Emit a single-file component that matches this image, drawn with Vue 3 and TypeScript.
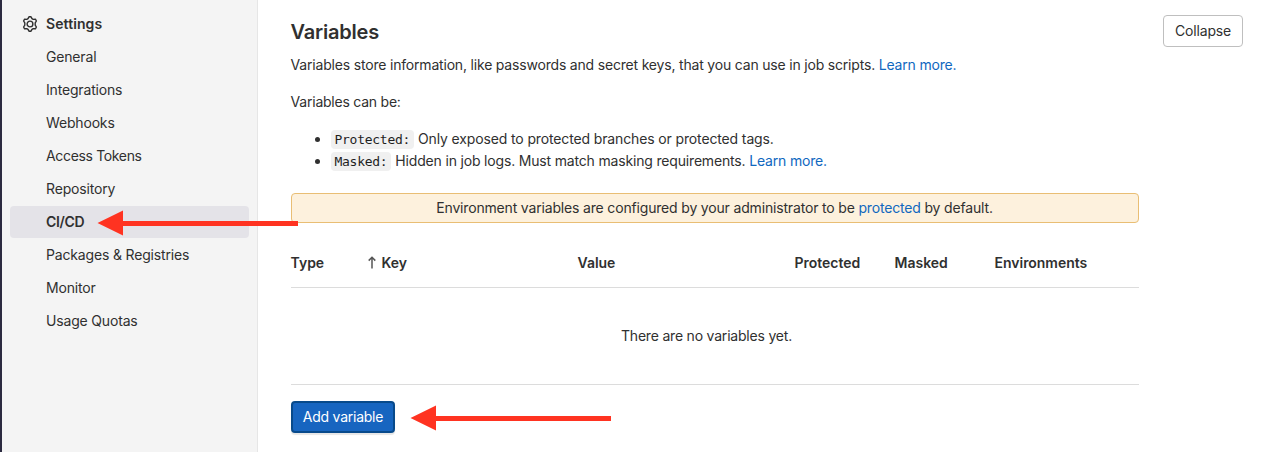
<script setup lang="ts">
interface NavItem {
  label: string
  active?: boolean
}

const navItems: NavItem[] = [
  { label: 'General' },
  { label: 'Integrations' },
  { label: 'Webhooks' },
  { label: 'Access Tokens' },
  { label: 'Repository' },
  { label: 'CI/CD', active: true },
  { label: 'Packages & Registries' },
  { label: 'Monitor' },
  { label: 'Usage Quotas' },
]
</script>

<template>
  <div class="page">
    <aside class="sidebar">
      <div class="nav-title">
        <svg class="gear" viewBox="0 0 16 16" width="16" height="16" fill="none" stroke="#303030" stroke-width="1.4" stroke-linejoin="round">
          <path d="M7 .8h2l1 1.900 1.200.7 2.200-.2 1 1.800-1.200 1.900v2.200l1.200 1.900-1 1.800-2.200-.2-1.200.7-1 1.900H7l-1-1.900-1.200-.7-2.200.2-1-1.800 1.200-1.900V6.900L1.600 5l1-1.800 2.200.2L6 2.700z" />
          <circle cx="8" cy="8" r="2.900" />
        </svg>
        <span>Settings</span>
      </div>
      <nav>
        <a v-for="item in navItems" :key="item.label" class="nav-item" :class="{ active: item.active }">{{ item.label }}</a>
      </nav>
    </aside>

    <main class="content">
      <header class="head">
        <h4>Variables</h4>
        <button class="btn collapse" type="button">Collapse</button>
      </header>
      <div class="body">
        <p class="intro">Variables store information, like passwords and secret keys, that you can use in job scripts. <a>Learn more.</a></p>
        <p class="can-be">Variables can be:</p>
        <ul>
          <li><code>Protected:</code> <span class="protected-text">Only exposed to protected branches or protected tags.</span></li>
          <li><code>Masked:</code> <span>Hidden in job logs. Must match masking requirements. <a>Learn more.</a></span></li>
        </ul>
        <div class="banner">Environment variables are configured by your administrator to be <a>protected</a> by default.</div>
        <div class="row thead">
          <span>Type</span>
          <span class="key">
            <svg width="8" height="13" viewBox="0 0 8 13" fill="none" stroke="#555" stroke-width="1.500"><path d="M4 12.500V1.400M.7 4.600 4 1.300l3.300 3.300" /></svg>
            Key
          </span>
          <span>Value</span>
          <span>Protected</span>
          <span>Masked</span>
          <span>Environments</span>
        </div>
        <div class="empty">There are no variables yet.</div>
        <button class="btn add" type="button">Add variable</button>
      </div>
    </main>

    <svg class="arrow arrow-nav" width="202" height="26" viewBox="0 0 202 26" fill="#ff3321">
      <path d="M.5 13 26 .5V11h175v5H26v9.500z" />
    </svg>
    <svg class="arrow arrow-add" width="202" height="26" viewBox="0 0 202 26" fill="#ff3321">
      <path d="M.5 13 26 .5V11h175v5H26v9.500z" />
    </svg>
  </div>
</template>

<style>
body {
  margin: 0;
  background: #fff;
}
</style>

<style scoped>
.page {
  position: relative;
  display: flex;
  width: 1276px;
  height: 452px;
  overflow: hidden;
  box-sizing: border-box;
  border-left: 2px solid #2b2a40;
  background: #fff;
  color: #303030;
  font: 14px/20px Inter, "Liberation Sans", sans-serif;
}
.sidebar {
  box-sizing: border-box;
  flex: none;
  width: 256px;
  padding: 8px 8px 0;
  background: #f4f4f4;
  border-right: 1px solid #e6e6e6;
}
.nav-title {
  display: flex;
  align-items: center;
  gap: 8px;
  height: 32px;
  margin-bottom: 1px;
  padding-left: 12px;
  font-weight: 600;
  letter-spacing: 0.08px;
}
.gear {
  display: block;
}
.nav-item {
  display: block;
  height: 32px;
  margin-bottom: 1px;
  padding-left: 36px;
  border-radius: 4px;
  line-height: 32px;
  letter-spacing: -0.17px;
}
.nav-item:nth-child(4) {
  letter-spacing: -0.34px;
}
.nav-item.active {
  background: #e4e3e8;
  font-weight: 600;
  letter-spacing: -0.3px;
}
.content {
  flex: 1;
  padding: 15px 33px 0;
}
.head {
  display: flex;
  justify-content: space-between;
  height: 40px;
}
h4 {
  margin: 5px 0 0 -0.5px;
  font-size: 20px;
  line-height: 25px;
  font-weight: 600;
  letter-spacing: -0.2px;
}
.body {
  width: 848px;
}
p {
  margin: 0 0 17px -0.4px;
  white-space: nowrap;
}
.intro {
  letter-spacing: -0.189px;
}
.can-be {
  margin-bottom: 16px;
  letter-spacing: -0.23px;
}
a {
  color: #1068bf;
}
.nav-item {
  color: #303030;
}
ul {
  margin: 0 0 21px;
  padding-left: 40px;
}
li {
  height: 22px;
  line-height: 22px;
  white-space: nowrap;
}
li span {
  letter-spacing: -0.175px;
}
li .protected-text {
  letter-spacing: -0.135px;
}
code {
  padding: 2px 4px 2px 3.5px;
  border-radius: 4px;
  background: #f0f0f0;
  color: #1f1f1f;
  font: 13px/15px "DejaVu Sans Mono", monospace;
  letter-spacing: -0.27px;
}
.banner {
  box-sizing: border-box;
  height: 30px;
  border: 1px solid #e9be74;
  border-radius: 4px;
  background: #fdf1dd;
  padding-right: 1px;
  line-height: 28px;
  text-align: center;
  letter-spacing: -0.17px;
}
.row {
  display: grid;
  grid-template-columns: 77px 210px 217px 100px 100px 144px;
  align-items: center;
  box-sizing: border-box;
  height: 65px;
  padding-top: 15px;
  border-bottom: 1px solid #dcdcdc;
  font-weight: 600;
  letter-spacing: -0.04px;
}
.row > span {
  margin-left: -0.4px;
}
.key {
  display: flex;
  align-items: center;
  gap: 6px;
}
.empty {
  box-sizing: border-box;
  height: 97px;
  border-bottom: 1px solid #dcdcdc;
  padding-right: 17px;
  line-height: 96px;
  text-align: center;
  letter-spacing: -0.2px;
}
.btn {
  box-sizing: border-box;
  height: 32px;
  padding: 0;
  border-radius: 4px;
  font: inherit;
  white-space: nowrap;
}
.collapse {
  width: 80px;
  border: 1px solid #bfbfbf;
  background: #fff;
  color: #303030;
  letter-spacing: -0.15px;
}
.add {
  display: block;
  width: 104px;
  margin-top: 16px;
  border: 2px solid #084a8b;
  background: #1765c0;
  box-shadow: 0 2px 1px #e6e6e6;
  color: #fff;
  letter-spacing: -0.25px;
}
.arrow {
  position: absolute;
}
.arrow-nav {
  left: 95px;
  top: 210px;
}
.arrow-add {
  left: 408px;
  top: 405px;
}
</style>
